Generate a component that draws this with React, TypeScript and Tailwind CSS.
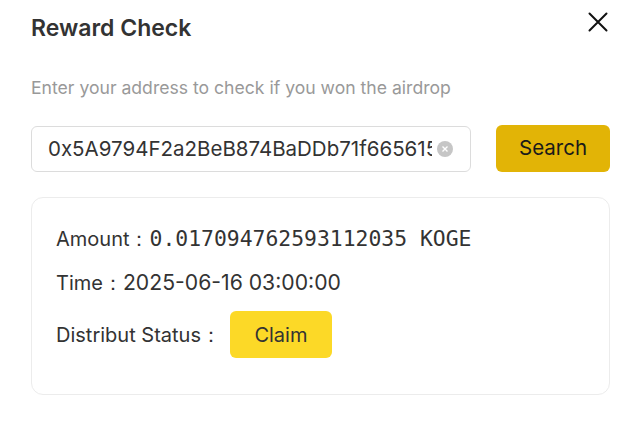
export default function App() {
  return (
    <div className="w-[640px] h-[424px] bg-white text-[#333] font-['Inter',sans-serif] pl-[31px] pr-[30px] pt-[13px]">
      {/* header */}
      <div className="flex items-start justify-between">
        <h1 className="text-[23px] leading-[30px] font-semibold text-[#333]">Reward Check</h1>
        <button className="-mt-[1px] mr-[2px] text-[#111]">
          <svg width="20" height="20" viewBox="0 0 20 20" fill="none" stroke="currentColor" strokeWidth="2" strokeLinecap="round">
            <path d="M1.5 1.5 L18.5 18.5 M18.5 1.5 L1.5 18.5" />
          </svg>
        </button>
      </div>

      <p className="mt-[33px] text-[17.6px] leading-[24px] text-[#999]">
        Enter your address to check if you won the airdrop
      </p>

      {/* search */}
      <div className="mt-[26px] flex gap-[25px]">
        <div className="flex-1 h-[46px] flex items-center border border-[#dcdcdc] rounded-[6px] pl-[16px] pr-[17px]">
          <input
            readOnly
            value="0x5A9794F2a2BeB874BaDDb71f665615C3a8e2F0d1"
            className="flex-1 min-w-0 outline-none bg-transparent text-[20.5px] text-[#333]"
          />
          <span className="ml-[5px] w-[16px] h-[16px] rounded-full bg-[#c6c6c6] flex items-center justify-center shrink-0">
            <svg width="6" height="6" viewBox="0 0 6 6" stroke="white" strokeWidth="1.4">
              <path d="M0.5 0.5 L5.5 5.5 M5.5 0.5 L0.5 5.5" />
            </svg>
          </span>
        </div>
        <button className="w-[114px] h-[47px] -mt-[1px] rounded-[6px] bg-[#e2b406] text-[20.5px] text-[#1a1a1a]">
          Search
        </button>
      </div>

      {/* result card */}
      <div className="mt-[25px] h-[198px] border border-[#ececec] rounded-[12px] pl-[24px] pt-[27px] flex flex-col">
        <div className="text-[20px] leading-[28px]">
          Amount：<span className="font-['DejaVu_Sans_Mono',monospace] text-[21.4px]">0.017094762593112035 KOGE</span>
        </div>
        <div className="mt-[15px] text-[20px] leading-[28px]">
          Time：<span className="text-[21.2px]">2025-06-16 03:00:00</span>
        </div>
        <div className="mt-[14px] flex items-center">
          <span className="text-[20px] leading-[28px]">Distribut Status：</span>
          <button className="ml-[9px] w-[102px] h-[47px] rounded-[6px] bg-[#fcd927] text-[20px] text-[#333]">
            Claim
          </button>
        </div>
      </div>
    </div>
  )
}
